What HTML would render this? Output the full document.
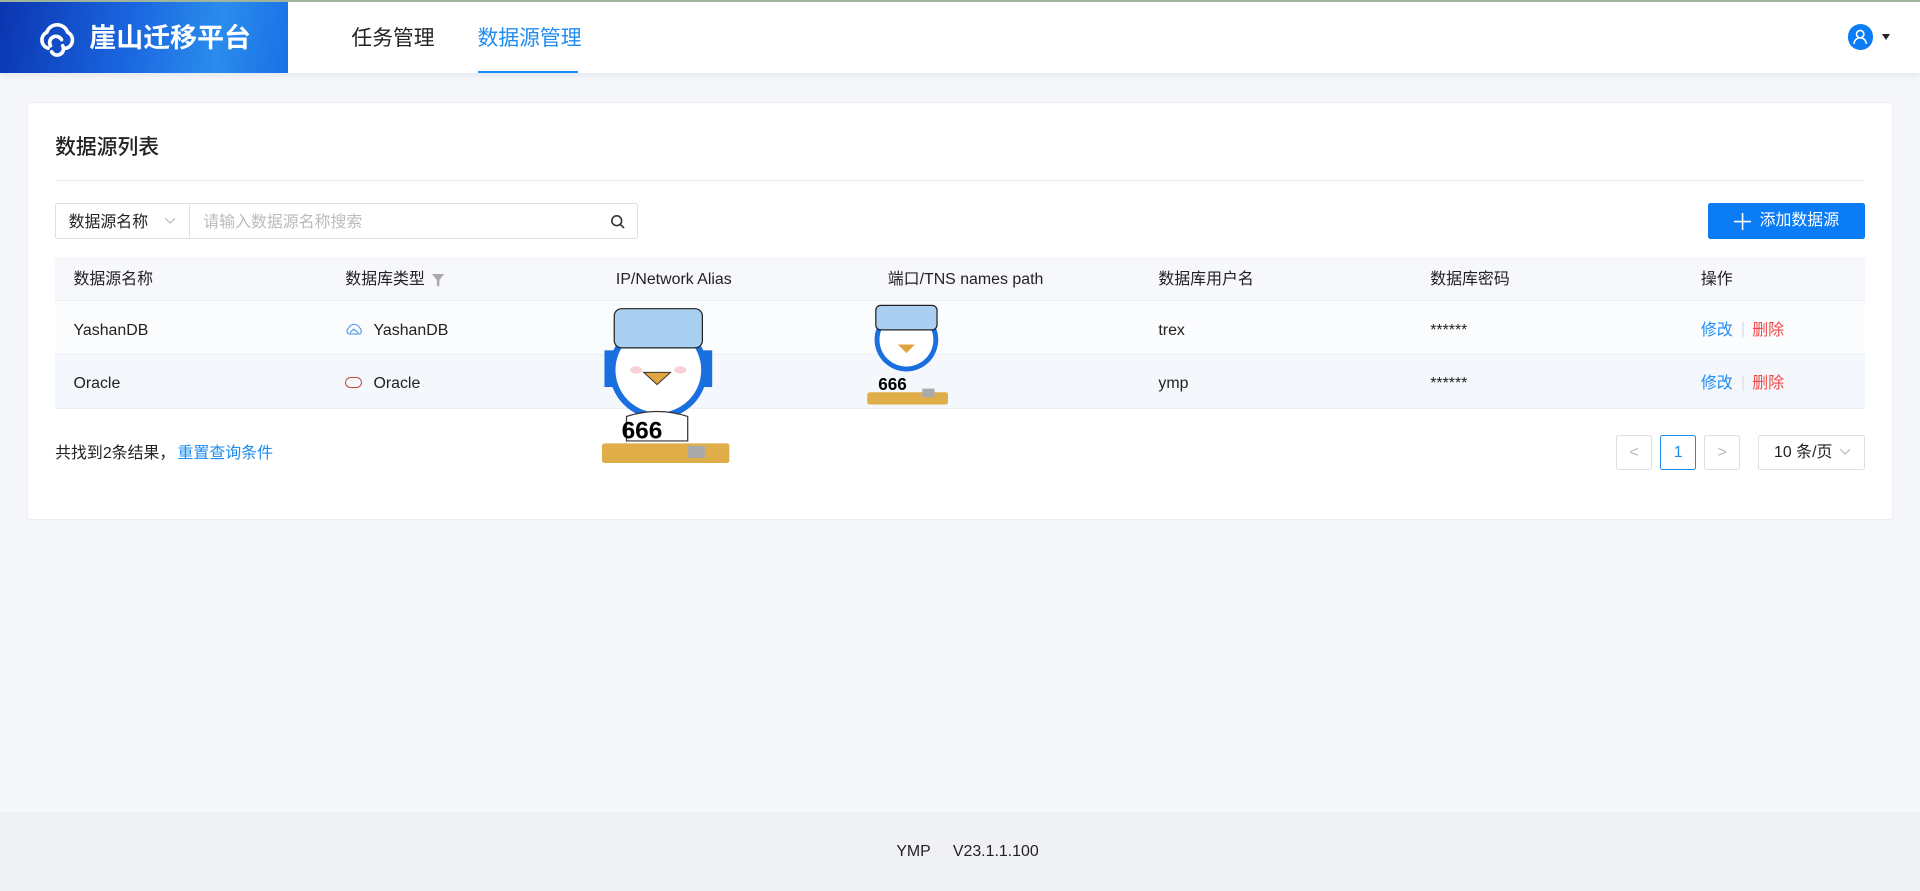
<!DOCTYPE html>
<html><head><meta charset="utf-8"><style>
html{zoom:1.22449}
*{box-sizing:border-box;margin:0;padding:0}
body{width:1568px;height:728px;overflow:hidden;background:#f5f7fb;font-family:"Liberation Sans","Noto Sans CJK SC",sans-serif;color:#222;font-size:13px;position:relative;line-height:18px}
.abs{position:absolute}
.hdr{position:absolute;left:0;top:0;width:1568px;height:60px;background:#fff;box-shadow:0 2px 6px rgba(0,30,80,.08);border-top:2px solid #9fb49c}
.logo{position:absolute;left:0;top:0;width:235px;height:58px;background:linear-gradient(100deg,#0b35b0 0%,#1a66e0 45%,#2a8cec 75%,#1a70e6 100%);overflow:hidden}
.logo:after{content:"";position:absolute;left:80px;top:-40px;width:260px;height:120px;border-radius:50%;border-bottom:6px solid rgba(120,220,255,.35);transform:rotate(-25deg)}
.logo span{position:absolute;left:73px;top:17px;color:#fff;font-size:22px;font-weight:bold;line-height:26px}
.nav{position:absolute;top:20px;font-size:17px;line-height:22px}
.card{position:absolute;left:22px;top:83px;width:1524px;height:342px;background:#fff;border:1px solid #eceef3;border-radius:2px}
.th{position:absolute;top:210px;left:45px;width:1478px;height:36px;background:#f6f8fb;border-bottom:1px solid #ebeef3}
.row{position:absolute;left:45px;width:1478px;height:44px;border-bottom:1px solid #ebeef3}
.c{position:absolute;font-size:13px;line-height:18px}
.pg{position:absolute;top:355px;width:29px;height:29px;border:1px solid #dcdfe6;border-radius:2px;text-align:center;line-height:27px;color:#bbb}
</style></head><body>
<div class="hdr">
 <div class="logo">
  <svg class="abs" style="left:30px;top:15px" width="32" height="30" viewBox="0 0 32 30" fill="none" stroke="#fff" stroke-width="3" stroke-linecap="round"><path d="M9 23 A7 7 0 0 1 8 10 A9 9 0 0 1 25 10 A7 7 0 0 1 24 23"/><path d="M11 21 A5 5 0 0 1 20 16"/><path d="M21 21 A5 5 0 0 1 12 26"/></svg>
  <span>崖山迁移平台</span>
 </div>
 <div class="nav" style="left:287px;color:#222">任务管理</div>
 <div class="nav" style="left:390px;color:#1f8cf0">数据源管理</div>
 <div class="abs" style="left:390px;top:56px;width:82px;height:2px;background:#1f8cf0"></div>
 <div class="abs" style="left:1509px;top:18px;width:21px;height:21px;border-radius:50%;background:#0a7cf5"></div>
 <svg class="abs" style="left:1512px;top:21px" width="15" height="15" viewBox="0 0 15 15" fill="none" stroke="#fff" stroke-width="1.3"><circle cx="7.5" cy="5" r="3"/><path d="M2.5 13 A5 5 0 0 1 12.5 13"/></svg>
 <div class="abs" style="left:1537px;top:26px;border-left:4px solid transparent;border-right:4px solid transparent;border-top:5px solid #222"></div>
</div>

<div class="card"></div>
<div class="abs" style="left:45px;top:110px;font-size:17px;font-weight:500;line-height:22px">数据源列表</div>
<div class="abs" style="left:45px;top:147px;width:1478px;height:1px;background:#e4e7ed"></div>

<div class="abs" style="left:45px;top:166px;width:476px;height:29px;border:1px solid #dcdfe6;border-radius:2px"></div>
<div class="abs" style="left:154px;top:166px;width:1px;height:29px;background:#dcdfe6"></div>
<div class="abs" style="left:56px;top:173px;font-size:13px">数据源名称</div>
<svg class="abs" style="left:134px;top:177px" width="10" height="7" viewBox="0 0 10 7" fill="none" stroke="#bbb"><path d="M1 1l4 4 4-4"/></svg>
<div class="abs" style="left:166px;top:173px;font-size:13px;color:#bbb">请输入数据源名称搜索</div>
<svg class="abs" style="left:498px;top:175px" width="13" height="13" viewBox="0 0 13 13" fill="none" stroke="#333" stroke-width="1.3"><circle cx="5.5" cy="5.5" r="4"/><path d="M8.5 8.5l3 3"/></svg>

<div class="abs" style="left:1395px;top:166px;width:128px;height:29px;background:#0a7cf5;border-radius:2px;color:#fff;font-size:13px;line-height:29px;padding-left:42px">添加数据源</div>
<svg class="abs" style="left:1416px;top:174px" width="14" height="14" viewBox="0 0 14 14" stroke="#fff" stroke-width="1.3"><path d="M7 0v14M0 7h14"/></svg>

<div class="th"></div>
<div class="c" style="left:60px;top:220px">数据源名称</div>
<div class="c" style="left:282px;top:220px">数据库类型</div>
<svg class="abs" style="left:353px;top:224px" width="10" height="10" viewBox="0 0 10 10" fill="#aaa"><path d="M0 0h10L6 5v5H4V5z"/></svg>
<div class="c" style="left:503px;top:220px">IP/Network Alias</div>
<div class="c" style="left:725px;top:220px">端口/TNS names path</div>
<div class="c" style="left:946px;top:220px">数据库用户名</div>
<div class="c" style="left:1168px;top:220px">数据库密码</div>
<div class="c" style="left:1389px;top:220px">操作</div>

<div class="row" style="top:246px;background:#fbfcfe"></div>
<div class="row" style="top:290px;background:#f4f7fb"></div>
<div class="c" style="left:60px;top:261px">YashanDB</div>
<svg class="abs" style="left:282px;top:264px" width="15" height="10" viewBox="0 0 15 10" fill="none" stroke="#5aa0f0"><path d="M3 9A3 3 0 0 1 3 4A5 5 0 0 1 12 4A3 3 0 0 1 12 9z"/><path d="M4 8l3-3 4 3"/></svg>
<div class="c" style="left:305px;top:261px">YashanDB</div>
<div class="c" style="left:946px;top:261px">trex</div>
<div class="c" style="left:1168px;top:261px">******</div>
<div class="c" style="left:1389px;top:261px;color:#1f8cf0">修改</div>
<div class="abs" style="left:1423px;top:263px;width:1px;height:12px;background:#e4e7ed"></div>
<div class="c" style="left:1431px;top:261px;color:#f04848">删除</div>

<div class="c" style="left:60px;top:305px">Oracle</div>
<div class="abs" style="left:282px;top:308px;width:14px;height:9px;border:1.5px solid #c9463d;border-radius:5px"></div>
<div class="c" style="left:305px;top:305px">Oracle</div>
<div class="c" style="left:946px;top:305px">ymp</div>
<div class="c" style="left:1168px;top:305px">******</div>
<div class="c" style="left:1389px;top:305px;color:#1f8cf0">修改</div>
<div class="abs" style="left:1423px;top:307px;width:1px;height:12px;background:#e4e7ed"></div>
<div class="c" style="left:1431px;top:305px;color:#f04848">删除</div>

<!-- mascots -->
<svg class="abs" style="left:492px;top:240px" width="106" height="140" viewBox="0 0 106 140">
<rect x="0" y="122" width="104" height="16" rx="2" fill="#e0ae48"/>
<circle cx="46" cy="62" r="40" fill="#1a6fe0"/><circle cx="46" cy="62" r="35" fill="#fff"/>
<rect x="2" y="46" width="8" height="30" fill="#1a6fe0"/><rect x="82" y="46" width="8" height="30" fill="#1a6fe0"/>
<rect x="10" y="12" width="72" height="32" rx="6" fill="#a9d0f0" stroke="#222"/>
<path d="M34 64l22 0-11 10z" fill="#e0a440" stroke="#333" stroke-width=".8"/>
<ellipse cx="28" cy="62" rx="5" ry="3" fill="#f8d0d8"/><ellipse cx="64" cy="62" rx="5" ry="3" fill="#f8d0d8"/>
<path d="M20 100q25-8 50 0v20H20z" fill="#fff" stroke="#333"/>
<text x="16" y="118" font-size="20" font-family="Liberation Sans" font-weight="bold">666</text>
<rect x="70" y="124" width="14" height="10" fill="#aaa"/>
</svg>
<svg class="abs" style="left:707px;top:243px" width="70" height="90" viewBox="0 0 70 90">
<rect x="1" y="77" width="66" height="10" rx="2" fill="#e0ae48"/>
<circle cx="33" cy="34" r="26" fill="#1a6fe0"/><circle cx="33" cy="34" r="22" fill="#fff"/>
<rect x="8" y="6" width="50" height="20" rx="4" fill="#a9d0f0" stroke="#222"/>
<path d="M26 38l14 0-7 7z" fill="#e0a440"/>
<text x="10" y="75" font-size="14" font-family="Liberation Sans" font-weight="bold">666</text>
<rect x="46" y="74" width="10" height="7" fill="#aaa"/>
</svg>

<div class="abs" style="left:45px;top:362px;font-size:13px">共找到2条结果，</div>
<div class="abs" style="left:145px;top:362px;font-size:13px;color:#1f8cf0">重置查询条件</div>

<div class="pg" style="left:1320px">&lt;</div>
<div class="pg" style="left:1356px;border-color:#1f8cf0;color:#1f8cf0">1</div>
<div class="pg" style="left:1392px">&gt;</div>
<div class="abs" style="left:1436px;top:355px;width:87px;height:29px;border:1px solid #dcdfe6;border-radius:2px;font-size:13px;line-height:27px;padding-left:12px">10 条/页</div>
<svg class="abs" style="left:1502px;top:366px" width="10" height="7" viewBox="0 0 10 7" fill="none" stroke="#bbb"><path d="M1 1l4 4 4-4"/></svg>

<div class="abs" style="left:0;top:663px;width:1568px;height:65px;background:#eff1f4"></div>
<div class="abs" style="left:732px;top:687px;font-size:13px">YMP&nbsp;&nbsp;&nbsp;&nbsp;&nbsp;V23.1.1.100</div>
</body></html>
